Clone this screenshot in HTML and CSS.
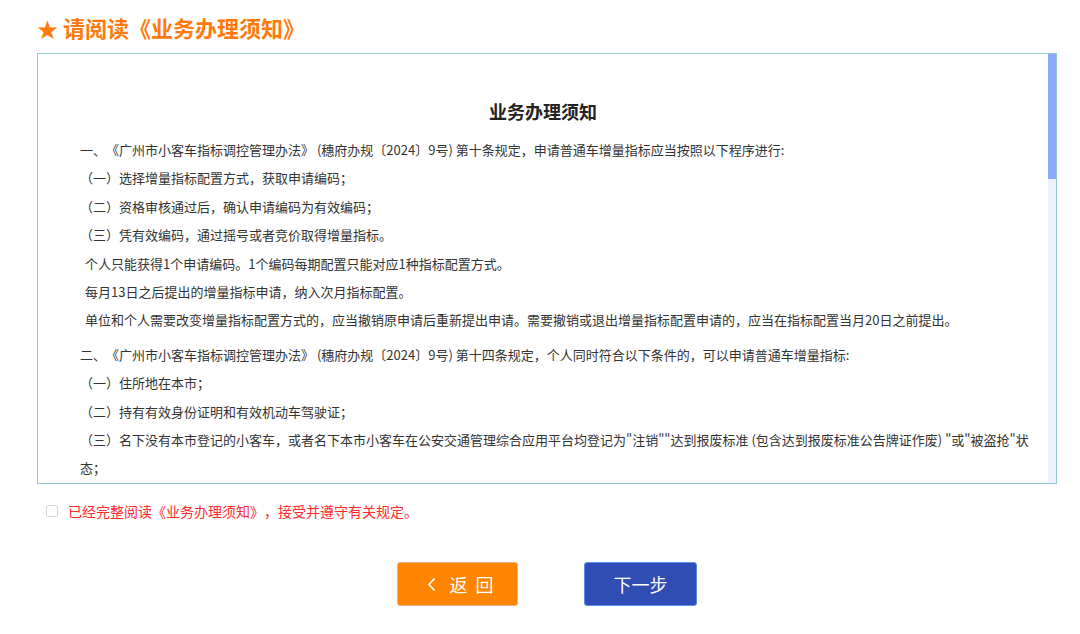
FILE: index.html
```html
<!DOCTYPE html>
<html lang="zh-CN">
<head>
    <meta charset="UTF-8">
    <meta name="viewport" content="width=device-width, initial-scale=1.0">
    <title>业务办理须知</title>
    <link rel="stylesheet" href="styles.css">
</head>
<body>
    <div class="container">
        <h1 class="page-title"><span class="star">★</span> 请阅读《业务办理须知》</h1>

        <div class="notice-wrap">
            <div class="notice-box">
                <h2>业务办理须知</h2>
                <div class="section">
                    <p>一、《广州市小客车指标调控管理办法》 (穗府办规〔2024〕9号) 第十条规定，申请普通车增量指标应当按照以下程序进行:</p>
                    <p>（一）选择增量指标配置方式，获取申请编码；</p>
                    <p>（二）资格审核通过后，确认申请编码为有效编码；</p>
                    <p>（三）凭有效编码，通过摇号或者竞价取得增量指标。</p>
                    <p class="indent">个人只能获得1个申请编码。1个编码每期配置只能对应1种指标配置方式。</p>
                    <p class="indent">每月13日之后提出的增量指标申请，纳入次月指标配置。</p>
                    <p class="indent">单位和个人需要改变增量指标配置方式的，应当撤销原申请后重新提出申请。需要撤销或退出增量指标配置申请的，应当在指标配置当月20日之前提出。</p>
                </div>
                <div class="section">
                    <p>二、《广州市小客车指标调控管理办法》 (穗府办规〔2024〕9号) 第十四条规定，个人同时符合以下条件的，可以申请普通车增量指标:</p>
                    <p>（一）住所地在本市；</p>
                    <p>（二）持有有效身份证明和有效机动车驾驶证；</p>
                    <p>（三）名下没有本市登记的小客车，或者名下本市小客车在公安交通管理综合应用平台均登记为"注销""达到报废标准 (包含达到报废标准公告牌证作废) "或"被盗抢"状态；</p>
                    <p>（四）本人名下没有有效的申请编码或者增量指标。</p>
                </div>
                <div class="section">
                    <p>三、《广州市小客车指标调控管理办法》 (穗府办规〔2024〕9号) 第十五条规定，单位同时符合以下条件的，可以申请普通车增量指标:</p>
                    <p>（一）在本市注册登记的企业、事业单位、社会团体、民办非企业单位等组织；</p>
                    <p>（二）在本市依法纳税，经营状况正常；</p>
                    <p>（三）名下在本市登记的小客车数量符合有关规定；</p>
                    <p>（四）单位名下没有有效的申请编码或者增量指标。</p>
                </div>
                <div class="section">
                    <p>四、申请人应当如实填写申请信息，并对申请信息的真实性负责。</p>
                    <p>（一）申请人提交虚假申请材料的，不予受理或者不予确认有效编码；</p>
                    <p>（二）已取得增量指标的，由指标管理机构收回并予以公告；</p>
                    <p>（三）申请人3年内不得再次提出增量指标申请。</p>
                    <p class="indent">申请人应当妥善保管本人的账号及密码，因账号或者密码泄露造成的后果由申请人自行承担。</p>
                </div>
                <div class="section">
                    <p>五、取得增量指标的个人和单位，应当在指标有效期内办理车辆登记手续。</p>
                    <p>（一）增量指标有效期为12个月，不得转让；</p>
                    <p>（二）逾期未使用的，视为放弃，由指标管理机构收回；</p>
                    <p>（三）放弃增量指标的，2年内不得再次提出增量指标申请。</p>
                    <p class="indent">本须知未尽事宜，按照《广州市小客车指标调控管理办法》及相关实施细则执行。</p>
                </div>
            </div>
            <div class="scroll-track"><div class="scroll-thumb"></div></div>
        </div>

        <label class="agree">
            <input type="checkbox" name="agree">
            <span>已经完整阅读《业务办理须知》，接受并遵守有关规定。</span>
        </label>

        <div class="actions">
            <button type="button" class="btn btn-back">
                <svg class="chevron" width="9" height="15" viewBox="0 0 9 15"><polyline points="7.5,1.5 2,7.5 7.5,13.5" fill="none" stroke="#fff" stroke-width="1.6"/></svg>
                <span>返 回</span>
            </button>
            <button type="submit" class="btn btn-next">下一步</button>
        </div>
    </div>
</body>
</html>
```

FILE: styles.css
```css
body {
    margin: 0;
    padding: 0;
    background-color: #fff;
    font-family: "Noto Sans CJK SC", "Liberation Sans", sans-serif;
    color: #333;
}
.container {
    width: 1020px;
    padding: 12px 0 0 37px;
}
.page-title {
    margin: 0;
    font-size: 22px;
    line-height: 30px;
    font-weight: bold;
    color: #ff7a0d;
}
.page-title .star {
    font-size: 21px;
}
.notice-wrap {
    position: relative;
    margin-top: 10px;
    border: 1px solid #93c9d3;
}
.notice-box {
    height: 429px;
    overflow-y: auto;
    scrollbar-width: none;
    padding: 0 12px 0 42px;
    text-spacing-trim: space-all;
}
.notice-box::-webkit-scrollbar {
    display: none;
}
.scroll-track {
    position: absolute;
    top: 0;
    right: 0;
    bottom: 0;
    width: 8px;
    background-color: #edf3fd;
}
.scroll-thumb {
    height: 125px;
    background-color: #8aa9ff;
}
.notice-box h2 {
    margin: 43px 38px 11px 0;
    text-align: center;
    font-size: 18px;
    line-height: 28px;
    font-weight: bold;
    color: #222;
}
.section {
    margin-bottom: 6px;
}
.section p {
    margin: 0;
    font-size: 13px;
    line-height: 28.4px;
    color: #333;
}
.section p.indent {
    padding-left: 5px;
}
.agree {
    display: flex;
    align-items: center;
    margin: 17px 0 0 9px;
    font-size: 14px;
    line-height: 20px;
    color: #ff2b2b;
    text-spacing-trim: space-all;
}
.agree input {
    appearance: none;
    width: 12px;
    height: 12px;
    margin: 0 10px 0 0;
    border: 1px solid #d4d6dd;
    border-radius: 2px;
    background-color: #fff;
}
.actions {
    display: flex;
    justify-content: center;
    gap: 66px;
    margin-top: 41px;
}
.btn {
    display: flex;
    align-items: center;
    justify-content: center;
    height: 44px;
    border-radius: 3px;
    font-family: inherit;
    font-size: 18px;
    color: #fff;
    cursor: pointer;
}
.btn-back {
    width: 121px;
    gap: 13px;
    padding-left: 12px;
    background-color: #ff8400;
    border: 1px solid #f3b070;
}
.btn-back span {
    letter-spacing: 2px;
    margin-right: -2px;
}
.btn-next {
    width: 113px;
    background-color: #2f4db3;
    border: 1px solid #5a8cf0;
}
```
